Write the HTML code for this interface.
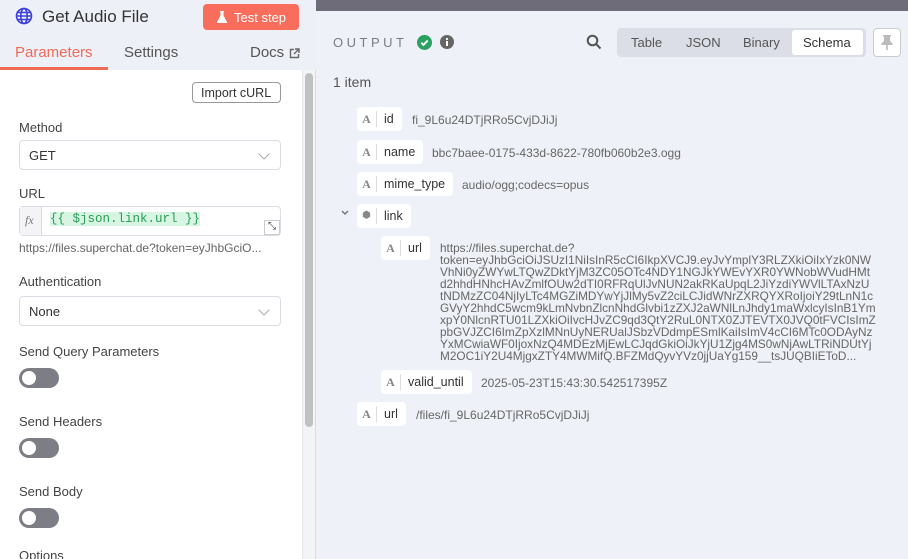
<!DOCTYPE html>
<html><head><style>
*{box-sizing:border-box;margin:0;padding:0}
html,body{width:908px;height:559px;overflow:hidden}
body{font-family:"Liberation Sans",sans-serif;background:#eff1f8;position:relative;color:#555}
.a{position:absolute}
.lbl{position:absolute;left:19px;font-size:13px;color:#444}
.sel{position:absolute;left:19px;width:262px;height:30px;border:1px solid #dcdce4;border-radius:4px;background:#fff;font-size:13px;color:#333;padding:7px 9px}
.sel:after{content:"";position:absolute;right:12px;top:9px;width:7px;height:7px;border-right:1px solid #aaa;border-bottom:1px solid #aaa;transform:rotate(45deg)}
.tog{position:absolute;left:19px;width:40px;height:20px;border-radius:10px;background:#7d7d85}
.tog:after{content:"";position:absolute;left:3px;top:3px;width:14px;height:14px;border-radius:50%;background:#fff}
.pill{position:absolute;height:24px;background:#fff;border-radius:4px;font-size:12.5px;color:#333;display:flex;align-items:center}
.pill i{font-style:normal;font-family:"Liberation Serif",serif;font-weight:bold;color:#888;font-size:12px;width:20px;text-align:center;border-right:1px solid #ddd;height:16px;line-height:16px}
.pill span{padding:0 8px 0 7px}
.val{position:absolute;font-size:12px;color:#666}
</style></head><body>
<div class="a" style="left:0;top:0;width:316px;height:70px;background:#eef0f7"></div>
<svg class="a" style="left:15px;top:7px" width="18" height="18" viewBox="0 0 18 18" fill="none" stroke="#3b3fd8" stroke-width="1.6"><circle cx="9" cy="9" r="7.5"/><ellipse cx="9" cy="9" rx="3.2" ry="7.5"/><path d="M1.5 9h15M2.5 5.5h13M2.5 12.5h13"/></svg>
<div class="a" style="left:42px;top:7px;font-size:17px;color:#333">Get Audio File</div>
<div class="a" style="left:203px;top:4px;width:96px;height:26px;background:#f86d5b;border-radius:4px;color:#fff;font-size:13px;padding:6px 0 0 31px">Test step</div>
<svg class="a" style="left:217px;top:11px" width="10" height="12" viewBox="0 0 10 12"><path d="M3 0h4v1H6.5v3.5L10 11v1H0v-1l3.5-6.5V1H3z" fill="#fff"/></svg>
<div class="a" style="left:15px;top:44px;font-size:15px;color:#f06a58">Parameters</div>
<div class="a" style="left:124px;top:44px;font-size:15px;color:#555">Settings</div>
<div class="a" style="left:250px;top:44px;font-size:15px;color:#555">Docs</div>
<svg class="a" style="left:289px;top:48px" width="11" height="11" viewBox="0 0 11 11" fill="none" stroke="#666" stroke-width="1.4"><path d="M5 1.5H1.5v8h8V6M6 1h4v4M10 1L5 6"/></svg>
<div class="a" style="left:0;top:67px;width:108px;height:3px;background:#f06a58"></div>
<div class="a" style="left:0;top:70px;width:302px;height:489px;background:#fff"></div>
<div class="a" style="left:302px;top:70px;width:14px;height:489px;background:#f4f4f6;border-left:1px solid #e6e6ea;border-right:1px solid #dcdce2"></div>
<div class="a" style="left:305px;top:73px;width:8px;height:354px;background:#c1c1c1;border-radius:4px"></div>
<div class="a" style="left:192px;top:82px;width:89px;height:21px;border:1px solid #999;border-radius:4px;font-size:12.5px;color:#333;padding:3px 0 0 8px">Import cURL</div>
<div class="lbl" style="top:120px">Method</div>
<div class="sel" style="top:140px">GET</div>
<div class="lbl" style="top:186px">URL</div>
<div class="a" style="left:19px;top:206px;width:262px;height:30px;border:1px solid #dcdce4;border-radius:4px;background:#fff"></div>
<div class="a" style="left:20px;top:207px;width:22px;height:28px;background:#f4f4f6;border-right:1px solid #dcdce4;font-family:'Liberation Serif',serif;font-style:italic;font-size:12px;color:#777;padding:6px 0 0 5px">fx</div>
<div class="a" style="left:50px;top:212px;font-family:'Liberation Mono',monospace;font-size:12.5px;color:#2a9d56;background:#d8f5e3">{{ $json.link.url }}</div>
<div class="a" style="left:264px;top:220px;width:16px;height:15px;border:1px solid #ccc;background:#fff;font-size:10px;text-align:center;color:#333">⤡</div>
<div class="a" style="left:19px;top:241px;font-size:12px;color:#666">https://files.superchat.de?token=eyJhbGciO...</div>
<div class="lbl" style="top:274px">Authentication</div>
<div class="sel" style="top:296px">None</div>
<div class="lbl" style="top:344px">Send Query Parameters</div>
<div class="tog" style="top:368px"></div>
<div class="lbl" style="top:414px">Send Headers</div>
<div class="tog" style="top:438px"></div>
<div class="lbl" style="top:484px">Send Body</div>
<div class="tog" style="top:508px"></div>
<div class="lbl" style="top:548px">Options</div>

<div class="a" style="left:316px;top:0;width:592px;height:11px;background:#6e6c78"></div>
<div class="a" style="left:333px;top:35px;font-size:13px;letter-spacing:3.5px;color:#7b7b85">OUTPUT</div>
<svg class="a" style="left:417px;top:35px" width="15" height="15" viewBox="0 0 14 14"><circle cx="7" cy="7" r="7" fill="#2aa160"/><path d="M4 7.2l2 2 4-4" stroke="#fff" stroke-width="1.8" fill="none"/></svg>
<svg class="a" style="left:440px;top:35px" width="14" height="14" viewBox="0 0 14 14"><circle cx="7" cy="7" r="7" fill="#666"/><rect x="6" y="6" width="2" height="5" fill="#fff"/><circle cx="7" cy="4" r="1.1" fill="#fff"/></svg>
<svg class="a" style="left:586px;top:34px" width="16" height="16" viewBox="0 0 16 16" fill="none" stroke="#555" stroke-width="2"><circle cx="6.5" cy="6.5" r="4.8"/><path d="M10 10l4.5 4.5"/></svg>
<div class="a" style="left:617px;top:28px;width:249px;height:29px;background:#dbdee7;border-radius:4px"></div>
<div class="a" style="left:631px;top:35px;font-size:13px;color:#555">Table</div>
<div class="a" style="left:686px;top:35px;font-size:13px;color:#555">JSON</div>
<div class="a" style="left:743px;top:35px;font-size:13px;color:#555">Binary</div>
<div class="a" style="left:792px;top:30px;width:71px;height:25px;background:#fff;border-radius:3px;font-size:13px;color:#333;padding:5px 0 0 11px">Schema</div>
<div class="a" style="left:873px;top:28px;width:28px;height:29px;border:1px solid #ccc;background:#fff;border-radius:4px"></div>
<svg class="a" style="left:881px;top:35px" width="12" height="15" viewBox="0 0 12 15"><path d="M2 0h8v1.5H9V6l2.5 2.5V10h-4.7v5h-1.6v-5H.5V8.5L3 6V1.5H2z" fill="#bbb"/></svg>
<div class="a" style="left:333px;top:74px;font-size:14px;color:#555">1 item</div>

<div class="pill" style="left:357px;top:107px"><i>A</i><span>id</span></div>
<div class="val" style="left:412px;top:113px">fi_9L6u24DTjRRo5CvjDJiJj</div>
<div class="pill" style="left:357px;top:140px"><i>A</i><span>name</span></div>
<div class="val" style="left:432px;top:146px">bbc7baee-0175-433d-8622-780fb060b2e3.ogg</div>
<div class="pill" style="left:357px;top:172px"><i>A</i><span>mime_type</span></div>
<div class="val" style="left:462px;top:178px">audio/ogg;codecs=opus</div>
<svg class="a" style="left:341px;top:210px" width="8" height="6" viewBox="0 0 8 6"><path d="M1 1l3 3 3-3" stroke="#777" stroke-width="1.5" fill="none"/></svg>
<div class="pill" style="left:357px;top:204px"><i style="font-family:'DejaVu Sans',sans-serif;font-size:10px">⬢</i><span>link</span></div>
<div class="pill" style="left:381px;top:236px"><i>A</i><span>url</span></div>
<div class="val" style="left:440px;top:242px;line-height:12px;font-size:11.8px;width:470px;white-space:pre">https://files.superchat.de?
token=eyJhbGciOiJSUzI1NiIsInR5cCI6IkpXVCJ9.eyJvYmplY3RLZXkiOiIxYzk0NW
VhNi0yZWYwLTQwZDktYjM3ZC05OTc4NDY1NGJkYWEvYXR0YWNobWVudHMt
d2hhdHNhcHAvZmlfOUw2dTI0RFRqUlJvNUN2akRKaUpqL2JiYzdiYWVlLTAxNzU
tNDMzZC04NjIyLTc4MGZiMDYwYjJlMy5vZ2ciLCJidWNrZXRQYXRoIjoiY29tLnN1c
GVyY2hhdC5wcm9kLmNvbnZlcnNhdGlvbi1zZXJ2aWNlLnJhdy1maWxlcyIsInB1Ym
xpY0NlcnRTU01LZXkiOiIvcHJvZC9qd3QtY2RuL0NTX0ZJTEVTX0JVQ0tFVCIsImZ
pbGVJZCI6ImZpXzlMNnUyNERUalJSbzVDdmpESmlKaiIsImV4cCI6MTc0ODAyNz
YxMCwiaWF0IjoxNzQ4MDEzMjEwLCJqdGkiOiJkYjU1Zjg4MS0wNjAwLTRiNDUtYj
M2OC1iY2U4MjgxZTY4MWMifQ.BFZMdQyvYVz0jjUaYg159__tsJUQBIiEToD...</div>
<div class="pill" style="left:381px;top:370px"><i>A</i><span>valid_until</span></div>
<div class="val" style="left:481px;top:376px">2025-05-23T15:43:30.542517395Z</div>
<div class="pill" style="left:357px;top:402px"><i>A</i><span>url</span></div>
<div class="val" style="left:416px;top:408px">/files/fi_9L6u24DTjRRo5CvjDJiJj</div>
</body></html>
